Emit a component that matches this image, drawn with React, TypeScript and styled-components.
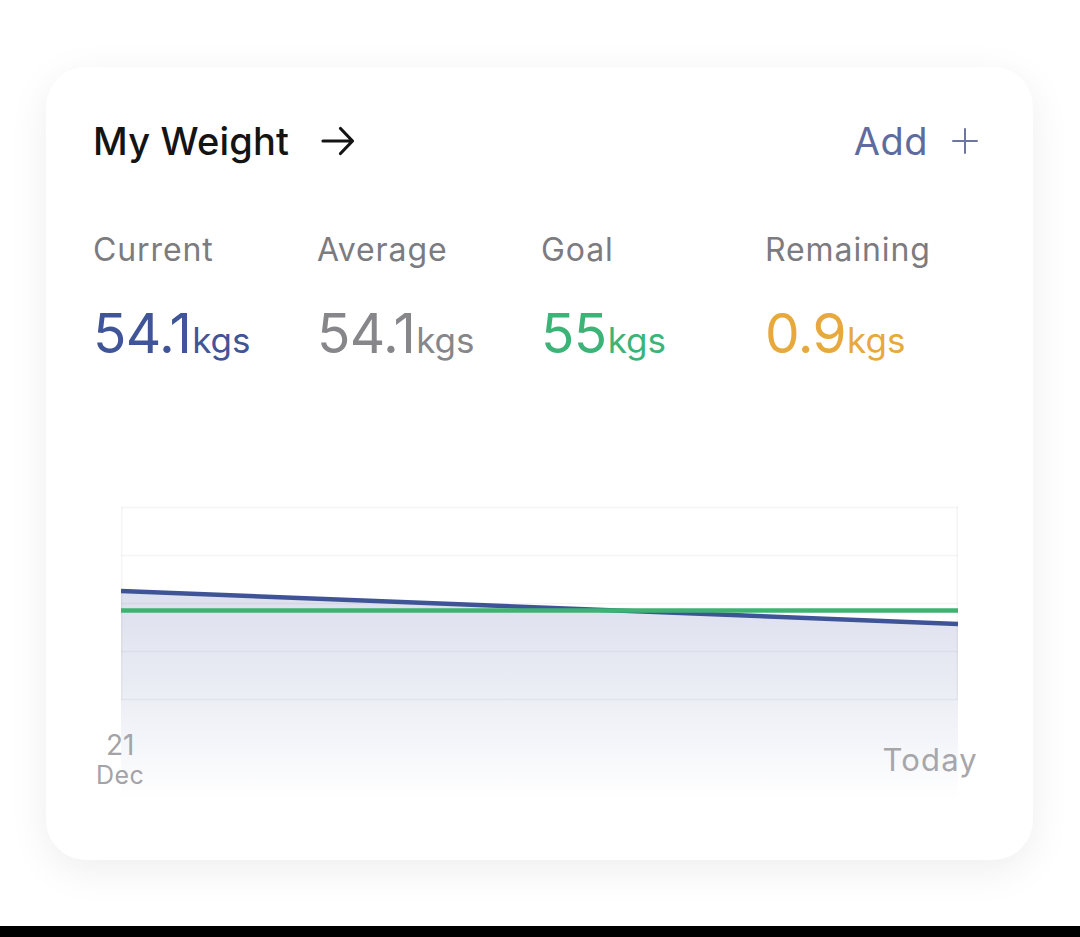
import { createGlobalStyle } from "styled-components"
import styled from "styled-components"

const GlobalStyle = createGlobalStyle`
    html, body {
        margin: 0;
        padding: 0;
        background: #ffffff;
    }
    * {
        box-sizing: border-box;
    }
`

const Screen = styled.div`
    display: flex;
    flex-direction: column;
    width: 1080px;
    height: 937px;
    font-family: Inter, "Noto Sans", sans-serif;
    background: #ffffff;
`

const Stage = styled.div`
    flex: 1;
    padding: 67px 47px 0 46px;
`

const BottomBar = styled.div`
    height: 11px;
    background: #000000;
`

const Card = styled.section`
    display: flex;
    flex-direction: column;
    height: 793px;
    padding: 50px 55px 0 47px;
    border-radius: 40px;
    background: #ffffff;
    box-shadow: 0 10px 40px rgba(0, 0, 0, 0.07);
`

const Header = styled.div`
    display: flex;
    justify-content: space-between;
    align-items: center;
    height: 48px;
`

const TitleLink = styled.div`
    display: flex;
    align-items: center;
    gap: 32px;
`

const Title = styled.h2`
    margin: 0;
    font-size: 38px;
    line-height: 48px;
    font-weight: 500;
    letter-spacing: 0.2px;
    color: #141414;
`

const AddButton = styled.button`
    display: flex;
    align-items: center;
    gap: 24px;
    padding: 0;
    border: 0;
    background: none;
    font-family: inherit;
    font-size: 38px;
    line-height: 48px;
    font-weight: 400;
    letter-spacing: 0.5px;
    color: #5f6b9e;
`

const Stats = styled.div`
    display: grid;
    grid-template-columns: repeat(4, 224px);
    margin-top: 65px;
`

const Stat = styled.div`
    display: flex;
    flex-direction: column;
    gap: 31px;
`

const StatLabel = styled.div`
    font-size: 32px;
    line-height: 40px;
    letter-spacing: 0.9px;
    color: #7b7b80;
`

const StatValue = styled.div<{ $color: string }>`
    display: flex;
    align-items: baseline;
    line-height: 64px;
    color: ${({ $color }) => $color};
`

const Number = styled.span`
    font-size: 55px;
    font-weight: 400;
    letter-spacing: -0.6px;
`

const Unit = styled.span`
    font-size: 35px;
    letter-spacing: 0px;
    margin-left: 1px;
`

const ChartArea = styled.div`
    display: grid;
    margin-top: 133px;
    width: 885px;
`

const ChartSvg = styled.svg`
    grid-area: 1 / 1;
    margin-left: 28px;
    display: block;
`

const AxisRow = styled.div`
    grid-area: 1 / 1;
    align-self: start;
    display: flex;
    justify-content: space-between;
    align-items: center;
    margin-top: 225px;
    padding-left: 3px;
`

const DateStack = styled.div`
    display: flex;
    flex-direction: column;
    align-items: center;
    color: #a3a3a8;
`

const DateDay = styled.span`
    font-size: 28px;
    line-height: 30px;
`

const DateMonth = styled.span`
    font-size: 25px;
    line-height: 30px;
    letter-spacing: 0.5px;
`

const AxisEnd = styled.span`
    font-size: 31px;
    line-height: 40px;
    letter-spacing: 1.2px;
    color: #a6a6ab;
`

const stats = [
    { label: "Current", value: "54.1", color: "#3f5597" },
    { label: "Average", value: "54.1", color: "#86868b" },
    { label: "Goal", value: "55", color: "#3db477" },
    { label: "Remaining", value: "0.9", color: "#e8a93c" },
]

const ArrowIcon = () => (
    <svg width="34" height="32" viewBox="0 0 34 32" fill="none">
        <path d="M2 16H31.5M19.5 3.5L31.5 16L19.5 28.5" stroke="#141414" strokeWidth="3.2" strokeLinecap="round" strokeLinejoin="round" />
    </svg>
)

const PlusIcon = () => (
    <svg width="26" height="26" viewBox="0 0 26 26" fill="none">
        <path d="M13 1V25M1 13H25" stroke="#6d76a3" strokeWidth="2" strokeLinecap="round" />
    </svg>
)

const WeightChart = () => {
    const w = 837
    const grid = [2, 50, 98, 146, 194]
    return (
        <ChartSvg width={w} height={300} viewBox={`0 0 ${w} 300`}>
            <defs>
                <linearGradient id="weightFill" x1="0" y1="0" x2="0" y2="1">
                    <stop offset="0" stopColor="#dcdfed" />
                    <stop offset="0.45" stopColor="#eaecf4" />
                    <stop offset="1" stopColor="#ffffff" />
                </linearGradient>
            </defs>
            <polygon points={`0,86 ${w},119 ${w},295 0,295`} fill="url(#weightFill)" />
            {grid.map((y) => (
                <line key={y} x1="0" x2={w} y1={y + 0.5} y2={y + 0.5} stroke="rgba(0,0,0,0.045)" strokeWidth="1.5" />
            ))}
            <line x1="0.75" x2="0.75" y1="2" y2="195" stroke="rgba(0,0,0,0.04)" strokeWidth="1.5" />
            <line x1={w - 0.75} x2={w - 0.75} y1="2" y2="195" stroke="rgba(0,0,0,0.04)" strokeWidth="1.5" />
            <line x1="0" x2={w} y1="86" y2="119" stroke="#3f5497" strokeWidth="4.5" />
            <line x1="0" x2={w} y1="105.5" y2="105.5" stroke="#3cb371" strokeWidth="4.5" />
        </ChartSvg>
    )
}

export default function App() {
    return (
        <Screen>
            <GlobalStyle />
            <Stage>
                <Card>
                    <Header>
                        <TitleLink>
                            <Title>My Weight</Title>
                            <ArrowIcon />
                        </TitleLink>
                        <AddButton>
                            Add
                            <PlusIcon />
                        </AddButton>
                    </Header>
                    <Stats>
                        {stats.map((s) => (
                            <Stat key={s.label}>
                                <StatLabel>{s.label}</StatLabel>
                                <StatValue $color={s.color}>
                                    <Number>{s.value}</Number>
                                    <Unit>kgs</Unit>
                                </StatValue>
                            </Stat>
                        ))}
                    </Stats>
                    <ChartArea>
                        <WeightChart />
                        <AxisRow>
                            <DateStack>
                                <DateDay>21</DateDay>
                                <DateMonth>Dec</DateMonth>
                            </DateStack>
                            <AxisEnd>Today</AxisEnd>
                        </AxisRow>
                    </ChartArea>
                </Card>
            </Stage>
            <BottomBar />
        </Screen>
    )
}
